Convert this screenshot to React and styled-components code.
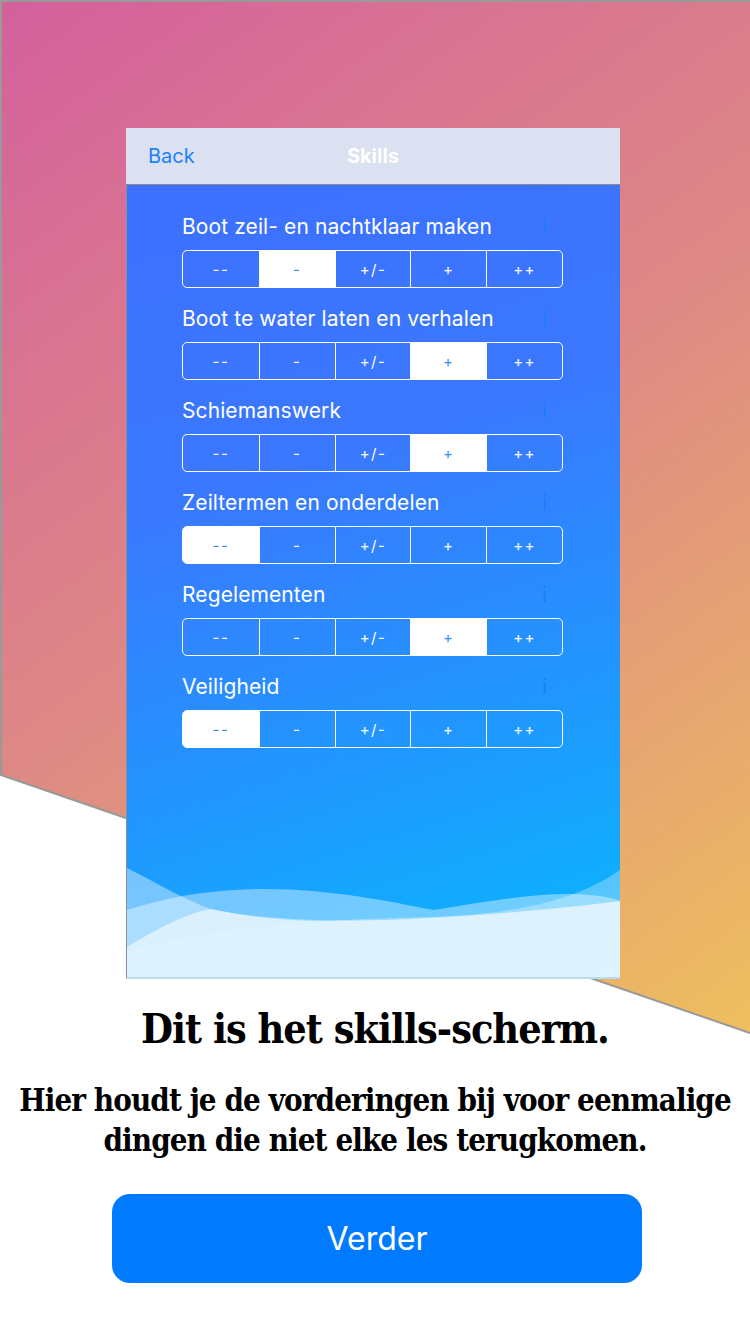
import React from 'react';
import styled, { createGlobalStyle } from 'styled-components';

const GlobalStyle = createGlobalStyle`
    body {
        margin: 0px;
        padding: 0px;
        background-color: #ffffff;
        font-family: Inter, "Noto Sans", sans-serif;
    }
`;

const Page = styled.div`
    position: relative;
    width: 750px;
    height: 1334px;
    overflow: hidden;
    display: flex;
    flex-direction: column;
`;
const Backdrop = styled.svg`
    position: absolute;
    left: 0;
    top: 0;
    z-index: 0;
`;
const Content = styled.div`
    position: relative;
    z-index: 1;
    display: flex;
    flex-direction: column;
    padding-top: 128px;
`;
const Phone = styled.div`
    width: 494px;
    margin-left: 126px;
    height: 851px;
    display: flex;
    flex-direction: column;
`;
const NavBar = styled.div`
    height: 56px;
    background-color: #dbe1f0;
    border-bottom: 1px solid #8c8c8c;
    display: grid;
    grid-template-columns: 1fr auto 1fr;
    align-items: center;
    padding: 0 22px;
`;
const Back = styled.span`
    font-size: 20px;
    color: #1a82fb;
`;
const NavTitle = styled.span`
    font-size: 20px;
    font-weight: 700;
    color: #ffffff;
`;
const Screen = styled.div`
    position: relative;
    flex: 1;
    background: linear-gradient(162deg, #3d70fe 0%, #3a78fe 35%, #1f99fe 70%, #07b8fd 100%);
    border-left: 1px solid #8a8fa0;
    border-bottom: 2px solid #b9dcef;
    padding: 29px 0 0 55px;
    display: flex;
    flex-direction: column;
    gap: 18px;
    overflow: hidden;
`;
const Skill = styled.div`
    position: relative;
    z-index: 1;
    width: 381px;
    display: flex;
    flex-direction: column;
    gap: 12px;
`;
const LabelRow = styled.div`
    display: flex;
    justify-content: space-between;
    align-items: center;
    height: 24px;
    padding-right: 16px;
`;
const Label = styled.span`
    font-size: 21px;
    font-weight: 400;
    color: #ffffff;
    letter-spacing: 0.1px;
`;
const Info = styled.span`
    font-size: 21px;
    font-weight: 300;
    color: #1a7cf5;
`;
const Segments = styled.div`
    height: 38px;
    box-sizing: border-box;
    border: 1.5px solid #ffffff;
    border-radius: 5px;
    display: grid;
    grid-template-columns: repeat(5, 1fr);
    overflow: hidden;
`;
const Segment = styled.div`
    display: flex;
    align-items: center;
    justify-content: center;
    font-size: 15px;
    letter-spacing: 1.5px;
    color: ${(p) => (p.$active ? '#3a8cfd' : '#ffffff')};
    background-color: ${(p) => (p.$active ? '#ffffff' : 'transparent')};
    border-left: ${(p) => (p.$first ? 'none' : '1px solid #ffffff')};
`;
const Waves = styled.svg`
    position: absolute;
    left: 0;
    bottom: 0;
    z-index: 0;
`;
const Heading = styled.h1`
    margin: 26px 0 0 0;
    text-align: center;
    font-family: "DejaVu Serif", serif;
    font-stretch: condensed;
    font-weight: 700;
    font-size: 41px;
    line-height: 48px;
    letter-spacing: -1px;
    color: #000000;
`;
const Sub = styled.p`
    margin: 27px 0 0 0;
    text-align: center;
    font-family: "DejaVu Serif", serif;
    font-stretch: condensed;
    font-weight: 700;
    font-size: 31px;
    line-height: 40px;
    letter-spacing: -0.9px;
    color: #000000;
`;
const Button = styled.button`
    margin: 34px 0 0 112px;
    width: 530px;
    height: 89px;
    border: none;
    border-radius: 18px;
    background-color: #007aff;
    color: #ffffff;
    font-family: Inter, "Noto Sans", sans-serif;
    font-size: 32px;
    font-weight: 400;
`;

const levels = ['--', '-', '+/-', '+', '++'];
const skills = [
    { name: 'Boot zeil- en nachtklaar maken', value: 1 },
    { name: 'Boot te water laten en verhalen', value: 3 },
    { name: 'Schiemanswerk', value: 3 },
    { name: 'Zeiltermen en onderdelen', value: 0 },
    { name: 'Regelementen', value: 3 },
    { name: 'Veiligheid', value: 0 },
];

export default function App() {
    return (
        <Page>
            <GlobalStyle />
            <Backdrop width="750" height="1334" viewBox="0 0 750 1334">
                <defs>
                    <linearGradient id="bg" x1="0" y1="0" x2="750" y2="1034" gradientUnits="userSpaceOnUse">
                        <stop offset="0" stopColor="#d4609d" />
                        <stop offset="0.5" stopColor="#de8985" />
                        <stop offset="1" stopColor="#eebf5e" />
                    </linearGradient>
                </defs>
                <polygon points="0,0 750,0 750,1033 0,775" fill="url(#bg)" />
                <polyline points="750,1 1,1 1,775 750,1033" fill="none" stroke="#999999" strokeWidth="2" />
            </Backdrop>
            <Content>
                <Phone>
                    <NavBar>
                        <Back>Back</Back>
                        <NavTitle>Skills</NavTitle>
                        <span />
                    </NavBar>
                    <Screen>
                        {skills.map((s) => (
                            <Skill key={s.name}>
                                <LabelRow>
                                    <Label>{s.name}</Label>
                                    <Info>i</Info>
                                </LabelRow>
                                <Segments>
                                    {levels.map((l, i) => (
                                        <Segment key={l} $active={i === s.value} $first={i === 0}>
                                            {l}
                                        </Segment>
                                    ))}
                                </Segments>
                            </Skill>
                        ))}
                        <Waves width="494" height="120" viewBox="0 0 494 120" preserveAspectRatio="none">
                            <path d="M0 11 C30 26 60 44 84 52 C130 62 200 66 280 62 C360 58 430 52 494 44 V120 H0 Z" fill="#ffffff" fillOpacity="0.4" />
                            <path d="M0 53 C40 40 80 33 130 32 C200 31 260 44 307 53 C350 46 400 37 440 37 C470 37 485 41 494 44 V120 H0 Z" fill="#ffffff" fillOpacity="0.4" />
                            <path d="M0 95 C80 70 200 62 300 60 C380 58 450 45 494 12 V120 H0 Z" fill="#ffffff" fillOpacity="0.3" />
                            <path d="M0 90 C30 72 60 56 84 52 C110 58 150 64 200 64 C300 64 400 56 494 44 V120 H0 Z" fill="#e2f3fd" fillOpacity="0.85" />
                        </Waves>
                    </Screen>
                </Phone>
                <Heading>Dit is het skills-scherm.</Heading>
                <Sub>
                    Hier houdt je de vorderingen bij voor eenmalige
                    <br />
                    dingen die niet elke les terugkomen.
                </Sub>
                <Button>Verder</Button>
            </Content>
        </Page>
    );
}
